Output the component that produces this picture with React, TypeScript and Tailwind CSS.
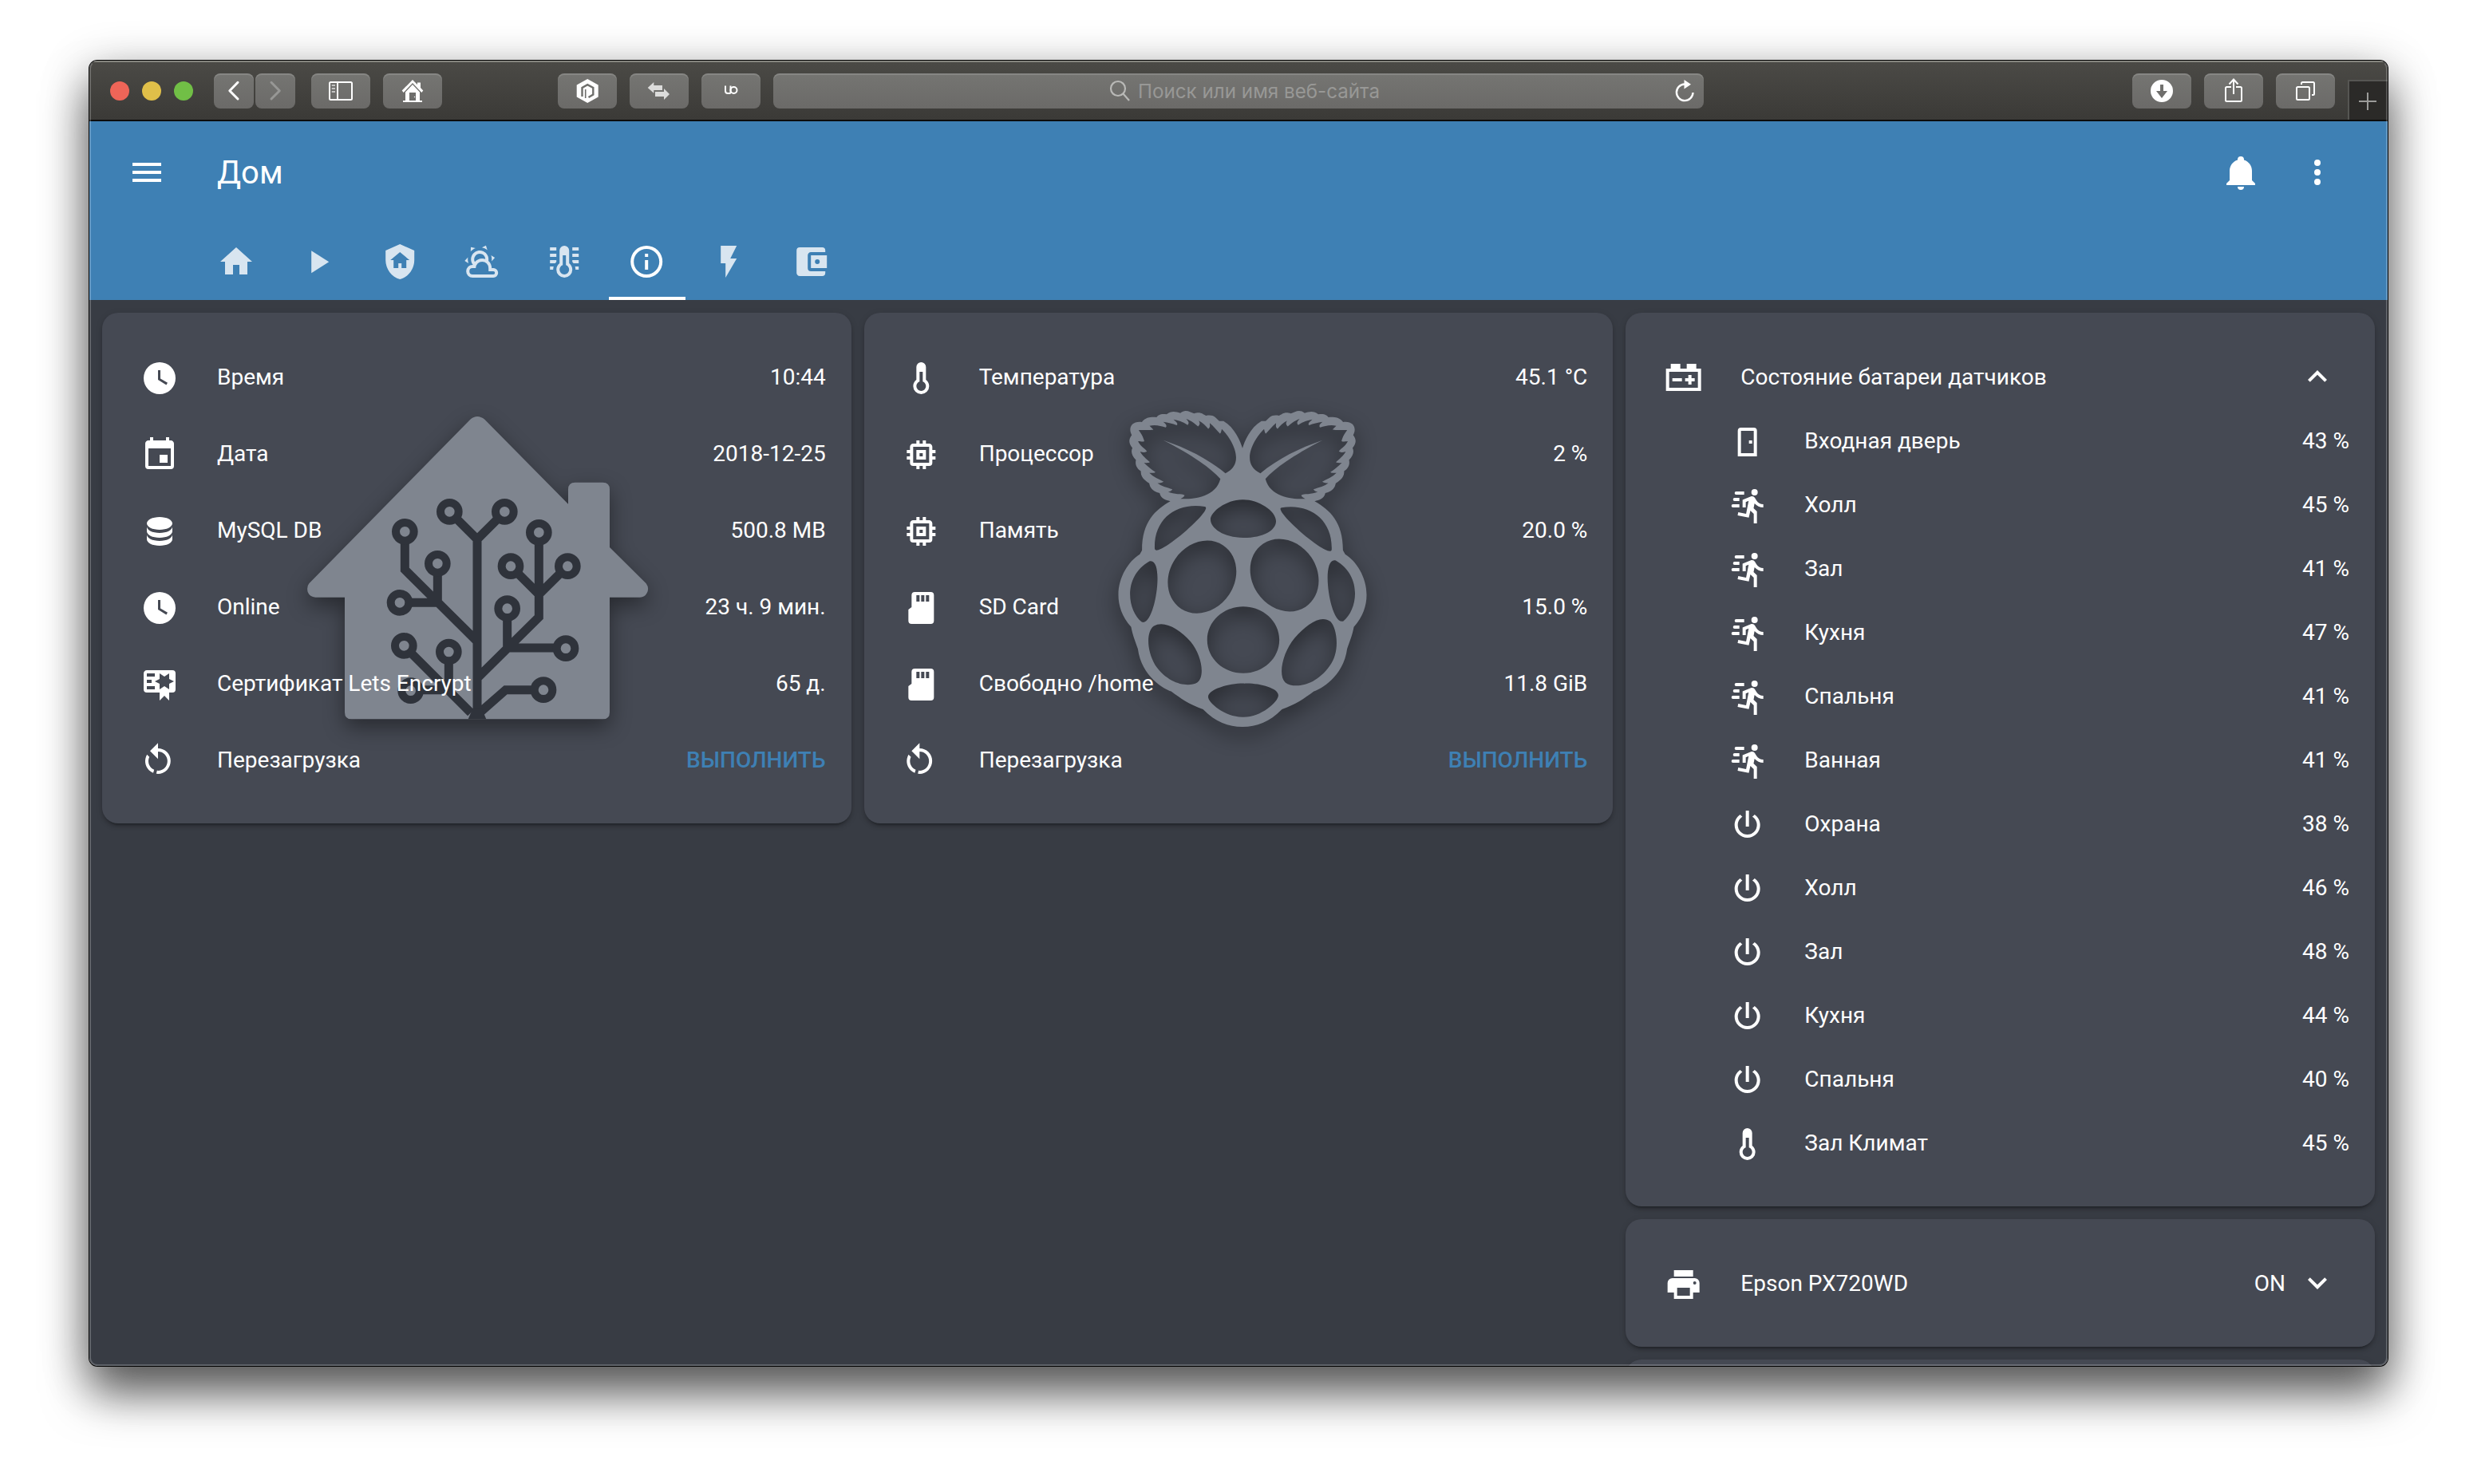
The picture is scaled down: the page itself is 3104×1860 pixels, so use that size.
import React from "react";
import { SiRaspberrypi } from "react-icons/si";

const I = {
  menu: "M3,6H21V8H3V6M3,11H21V13H3V11M3,16H21V18H3V16Z",
  dots: "M12,16A2,2 0 0,1 14,18A2,2 0 0,1 12,20A2,2 0 0,1 10,18A2,2 0 0,1 12,16M12,10A2,2 0 0,1 14,12A2,2 0 0,1 12,14A2,2 0 0,1 10,12A2,2 0 0,1 12,10M12,4A2,2 0 0,1 14,6A2,2 0 0,1 12,8A2,2 0 0,1 10,6A2,2 0 0,1 12,4Z",
  bell: "M21,19V20H3V19L5,17V11C5,7.9 7.03,5.17 10,4.29C10,4.19 10,4.1 10,4A2,2 0 0,1 12,2A2,2 0 0,1 14,4C14,4.1 14,4.19 14,4.29C16.97,5.17 19,7.9 19,11V17L21,19M14,21A2,2 0 0,1 12,23A2,2 0 0,1 10,21",
  home: "M10,20V14H14V20H19V12H22L12,3L2,12H5V20H10Z",
  play: "M8,5.14V19.14L19,12.14L8,5.14Z",
  shieldHome: "M11,13H13V16H16V11H18L12,6L6,11H8V16H11V13M12,1L21,5V11C21,16.55 17.16,21.74 12,23C6.84,21.74 3,16.55 3,11V5L12,1Z",
  weather: "M12.74,5.47C15.1,6.5 16.35,9.03 15.92,11.46C17.19,12.56 18,14.19 18,16V16.17C18.31,16.06 18.65,16 19,16A3,3 0 0,1 22,19A3,3 0 0,1 19,22H6A4,4 0 0,1 2,18A4,4 0 0,1 6,14H6.27C5,12.45 4.6,10.24 5.5,8.26C6.72,5.5 9.97,4.24 12.74,5.47M11.93,7.3C10.16,6.5 8.09,7.31 7.31,9.07C6.85,10.09 6.93,11.22 7.41,12.13C8.5,10.83 10.16,10 12,10C12.7,10 13.38,10.12 14,10.34C13.94,9.06 13.18,7.86 11.93,7.3M13.55,3.64C13,3.4 12.45,3.23 11.88,3.12L14.37,1.82L15.27,4.71C14.76,4.29 14.19,3.93 13.55,3.64M6.09,4.44C5.6,4.79 5.17,5.19 4.8,5.63L4.91,2.82L7.87,3.5C7.25,3.71 6.65,4.03 6.09,4.44M18,9.71C17.91,9.12 17.78,8.55 17.59,8L19.97,9.5L17.92,11.73C18.03,11.08 18.05,10.4 18,9.71M3.04,11.3C3.11,11.9 3.24,12.47 3.43,13L1.06,11.5L3.1,9.28C3,9.93 2.97,10.61 3.04,11.3M19,18H16V16A4,4 0 0,0 12,12A4,4 0 0,0 8,16H6A2,2 0 0,0 4,18A2,2 0 0,0 6,20H19A1,1 0 0,0 20,19A1,1 0 0,0 19,18Z",
  thermoLines: "M17,3H21V5H17V3M17,7H21V9H17V7M17,11H21V13H17.75L17,12.1V11M21,15V17H19C19,16.31 18.9,15.63 18.71,15H21M17,17A5,5 0 0,1 12,22A5,5 0 0,1 7,17C7,15.36 7.79,13.91 9,13V5A3,3 0 0,1 12,2A3,3 0 0,1 15,5V13C16.21,13.91 17,15.36 17,17M11,8V14.17C9.83,14.58 9,15.69 9,17A3,3 0 0,0 12,20A3,3 0 0,0 15,17C15,15.69 14.17,14.58 13,14.17V8H11M7,3V5H3V3H7M7,7V9H3V7H7M7,11V12.1L6.25,13H3V11H7M3,15H5.29C5.1,15.63 5,16.31 5,17H3V15Z",
  info: "M11,9H13V7H11M12,20C7.59,20 4,16.41 4,12C4,7.59 7.59,4 12,4C16.41,4 20,7.59 20,12C20,16.41 16.41,20 12,20M12,2A10,10 0 0,0 2,12A10,10 0 0,0 12,22A10,10 0 0,0 22,12A10,10 0 0,0 12,2M11,17H13V11H11V17Z",
  flash: "M7,2V13H10V22L17,10H13L17,2H7Z",
  wallet: "M21,18V19A2,2 0 0,1 19,21H5C3.89,21 3,20.1 3,19V5A2,2 0 0,1 5,3H19A2,2 0 0,1 21,5V6H12C10.89,6 10,6.9 10,8V16A2,2 0 0,0 12,18M12,16H22V8H12M16,13.5A1.5,1.5 0 0,1 14.5,12A1.5,1.5 0 0,1 16,10.5A1.5,1.5 0 0,1 17.5,12A1.5,1.5 0 0,1 16,13.5Z",
  clock: "M12,2A10,10 0 1,0 22,12A10,10 0 0,0 12,2M16.2,16.2L11,13V7H12.5V12.2L17,14.9L16.2,16.2Z",
  calendar: "M19,19H5V8H19M16,1V3H8V1H6V3H5C3.89,3 3,3.89 3,5V19A2,2 0 0,0 5,21H19A2,2 0 0,0 21,19V5C21,3.89 20.1,3 19,3H18V1M17,12H12V17H17V12Z",
  database: "M12,3C7.58,3 4,4.79 4,7C4,9.21 7.58,11 12,11C16.42,11 20,9.21 20,7C20,4.79 16.42,3 12,3M4,9V12C4,14.21 7.58,16 12,16C16.42,16 20,14.21 20,12V9C20,11.21 16.42,13 12,13C7.58,13 4,11.21 4,9M4,14V17C4,19.21 7.58,21 12,21C16.42,21 20,19.21 20,17V14C20,16.21 16.42,18 12,18C7.58,18 4,16.21 4,14Z",
  certificate: "M4,3C2.89,3 2,3.89 2,5V15A2,2 0 0,0 4,17H12V22L15,19L18,22V17H20A2,2 0 0,0 22,15V5A2,2 0 0,0 20,3H4M12,5L15,7L18,5V8.5L21,10L18,11.5V15L15,13L12,15V11.5L9,10L12,8.5V5M4,5H9V7H4V5M4,9H7V11H4V9M4,13H9V15H4V13Z",
  restart: "M11,4C13.1,4 15.1,4.8 16.6,6.3C19.7,9.4 19.7,14.5 16.6,17.6C14.8,19.5 12.3,20.2 9.9,19.9L10.4,17.9C12.1,18.1 13.9,17.5 15.2,16.2C17.5,13.9 17.5,10.1 15.2,7.7C14.1,6.6 12.5,6 11,6V10.6L6,5.6L11,0.6V4M5.3,17.6C2.7,15 2.3,11 4.1,7.9L5.6,9.4C4.5,11.6 4.9,14.4 6.8,16.2C7.3,16.7 7.9,17.1 8.6,17.4L8,19.4C7,19 6.1,18.4 5.3,17.6Z",
  thermometer: "M17,17A5,5 0 0,1 12,22A5,5 0 0,1 7,17C7,15.36 7.79,13.91 9,13V5A3,3 0 0,1 12,2A3,3 0 0,1 15,5V13C16.21,13.91 17,15.36 17,17M11,8V14.17C9.83,14.58 9,15.69 9,17A3,3 0 0,0 12,20A3,3 0 0,0 15,17C15,15.69 14.17,14.58 13,14.17V8H11Z",
  chip: "M17,17H7V7H17M21,11V9H19V7C19,5.89 18.1,5 17,5H15V3H13V5H11V3H9V5H7C5.89,5 5,5.89 5,7V9H3V11H5V13H3V15H5V17A2,2 0 0,0 7,19H9V21H11V19H13V21H15V19H17A2,2 0 0,0 19,17V15H21V13H19V11M13,13H11V11H13M15,9H9V15H15V9Z",
  sd: "M8,2A2,2 0 0,0 6,4V11.5L4,13V20A2,2 0 0,0 6,22H18A2,2 0 0,0 20,20V4A2,2 0 0,0 18,2H8M9,4H11V8H9V4M12,4H14V8H12V4M15,4H17V8H15V4Z",
  battery: "M4,3V6H1V20H23V6H20V3H14V6H10V3H4M3,8H21V18H3V8M15,10V12H13V14H15V16H17V14H19V12H17V10H15M5,12V14H11V12H5Z",
  door: "M8,3H16A2,2 0 0,1 18,5V21H6V5A2,2 0 0,1 8,3M8,5V19H16V5H8M13,11H15V13H13V11Z",
  run: "M16.5,5.5A2,2 0 0,0 18.5,3.5A2,2 0 0,0 16.5,1.5A2,2 0 0,0 14.5,3.5A2,2 0 0,0 16.5,5.5M12.9,19.4L13.9,15L16,17V23H18V15.5L15.9,13.5L16.5,10.5C17.89,12.09 19.89,13 22,13V11C20.24,11.03 18.6,10.11 17.7,8.6L16.7,7C16.34,6.4 15.7,6 15,6C14.7,6 14.5,6.1 14.2,6.1L9,8.3V13H11V9.6L12.8,8.9L11.2,17L6.3,16L5.9,18L12.9,19.4M4,9A1,1 0 0,1 3,8A1,1 0 0,1 4,7H7V9H4M5,5A1,1 0 0,1 4,4A1,1 0 0,1 5,3H10V5H5M3,13A1,1 0 0,1 2,12A1,1 0 0,1 3,11H7V13H3Z",
  power: "M16.56,5.44L15.11,6.89C16.84,7.94 18,9.83 18,12A6,6 0 0,1 12,18A6,6 0 0,1 6,12C6,9.83 7.16,7.94 8.88,6.88L7.44,5.44C5.36,6.88 4,9.28 4,12A8,8 0 0,0 12,20A8,8 0 0,0 20,12C20,9.28 18.64,6.88 16.56,5.44M13,3H11V13H13",
  printer: "M18,3H6V7H18M19,12A1,1 0 0,1 18,11A1,1 0 0,1 19,10A1,1 0 0,1 20,11A1,1 0 0,1 19,12M16,19H8V14H16M19,8H5A3,3 0 0,0 2,11V17H6V21H18V17H22V11A3,3 0 0,0 19,8Z",
  up: "M7.41,15.41L12,10.83L16.59,15.41L18,14L12,8L6,14L7.41,15.41Z",
  down: "M7.41,8.58L12,13.17L16.59,8.58L18,10L12,16L6,10L7.41,8.58Z",
};

function Icon({ d }: { d: string }) {
  return (
    <svg viewBox="0 0 24 24" className="size-12 shrink-0" fill="currentColor" fillRule="evenodd">
      <path d={d} />
    </svg>
  );
}

function Row({ icon, label, value, action, chevron }: { icon: string; label: string; value?: string; action?: boolean; chevron?: string }) {
  return (
    <div className="flex h-20 items-center">
      <div className="lead mr-8 flex h-20 w-20 items-center justify-center pt-1">
        <Icon d={icon} />
      </div>
      <span className="flex-1 pt-0.5 whitespace-nowrap">{label}</span>
      {value && <span className={action ? "pt-0.5 font-medium text-[#3e80b4]" : "pt-0.5"}>{value}</span>}
      {chevron && (
        <div className="flex w-20 justify-center">
          <Icon d={chevron} />
        </div>
      )}
    </div>
  );
}

const CARD = "relative rounded-[20px] bg-[#454953] px-8 py-10 shadow-[0_4px_4px_rgba(0,0,0,0.14),0_2px_10px_rgba(0,0,0,0.12),0_6px_2px_-4px_rgba(0,0,0,0.2)]";

const RINGS: [number, number][] = [
  [610, 424], [817, 424], [442, 499], [946, 502], [565, 619], [840, 629], [1054, 629], [423, 766],
  [827, 788], [439, 928], [607, 951], [1047, 938], [464, 1097], [963, 1094],
];

function HouseArt() {
  return (
    <svg viewBox="0 0 1440 1320" className="absolute top-[108px] left-[232px] h-[440px] w-[480px] overflow-visible">
      <g className="[filter:drop-shadow(0px_30px_40px_rgba(0,0,0,0.42))]">
        <path
          fill="#7f858f"
          d="M688,77Q714,55 742,77L1056,395V340Q1056,314 1082,314H1186Q1212,314 1212,340V558L1349,694Q1362,712 1352,730Q1344,746 1326,746H1212V1178Q1212,1204 1186,1204H242Q216,1204 216,1178V746H106Q84,744 77,726Q72,706 82,694Z"
        />
      </g>
      <g fill="none" stroke="#2f333b" strokeWidth="33">
        <path d="M714,1190V525M622,436L714,528L806,436M442,530V642L714,912M565,650V763M450,766H568M946,535V820L714,1050M851,640L946,735L1042,640M827,820V936H1020M450,940L690,1180M607,980V1094H490M714,1188L821,1094H940" />
      </g>
      <path d="M680,1204L697,1165H731L748,1204Z" fill="#2f333b" />
      {RINGS.map(([x, y]) => (
        <circle key={`${x}-${y}`} cx={x} cy={y} r="34" fill="#7f858f" stroke="#2f333b" strokeWidth="30" />
      ))}
    </svg>
  );
}

function BerryArt() {
  return (
    <div className="absolute top-[123px] left-[276px] scale-x-[0.988] [filter:drop-shadow(0px_10px_13px_rgba(0,0,0,0.42))]">
      <SiRaspberrypi className="size-[396px] text-[#7f858f] [clip-path:polygon(0_0,100%_0,100%_92px,325px_92px,313px_104px,313px_128px,324px_139px,100%_139px,100%_100%,0_100%)]" />
    </div>
  );
}

const TB = "flex h-11 items-center justify-center rounded-[8px] bg-linear-to-b from-[#757572] to-[#6b6a68] text-white shadow-[inset_0_2px_0_rgba(255,255,255,0.13)]";

function Toolbar() {
  return (
    <div className="flex h-[76px] items-start border-b-2 border-[#0c0c0b] bg-linear-to-b from-[#4b4a46] to-[#3b3a37] shadow-[inset_0_2px_0_#84847e]">
      <div className="flex w-[156px] gap-4 pt-[26px] pl-[26px]">
        <div className="size-6 rounded-full bg-[#ee6558]" />
        <div className="size-6 rounded-full bg-[#e0bf49]" />
        <div className="size-6 rounded-full bg-[#71bf46]" />
      </div>
      <div className="flex pt-4">
        <div className={`${TB} w-[50px]`}>
          <svg viewBox="0 0 50 44" className="h-11 w-[50px]" fill="none" stroke="currentColor" strokeWidth="3" strokeLinecap="round" strokeLinejoin="round">
            <path d="M30,11.300L19.800,21.700L30,32" />
          </svg>
        </div>
        <div className={`${TB} ml-0.5 w-[50px]`}>
          <svg viewBox="0 0 50 44" className="h-11 w-[50px] text-[#979795]" fill="none" stroke="currentColor" strokeWidth="3" strokeLinecap="round" strokeLinejoin="round">
            <path d="M20,11.300L30.300,21.700L20,32" />
          </svg>
        </div>
        <div className={`${TB} ml-5 w-[74px]`}>
          <svg viewBox="0 0 74 44" className="h-11 w-[74px]" fill="none" stroke="currentColor" strokeWidth="2">
            <rect x="23" y="11" width="28" height="22" rx="1.5" />
            <path d="M33,11V33" />
            <path d="M25.700,15H30M25.700,19H30M25.700,23H30" stroke="#c4c4c3" />
          </svg>
        </div>
        <div className={`${TB} ml-4 w-[74px]`}>
          <svg viewBox="0 0 74 44" className="h-11 w-[74px]" fill="currentColor">
            <path d="M37,8L23.700,21.500L25.700,24L37,12L48.300,24L50.300,21.500L47,18V11.500H43V14Z" />
            <path fillRule="evenodd" d="M37,14L28,23.500V34H25V36H49V34H46V23.500ZM33,24H41V34H33Z" />
            <circle cx="39.500" cy="29.500" r="0.700" />
          </svg>
        </div>
        <div className={`${TB} ml-[145px] w-[74px]`}>
          <svg viewBox="0 0 74 44" className="h-11 w-[74px]">
            <path d="M37.200,7L50.700,14.500V29.500L37.200,37L23.700,29.500V14.500Z" fill="currentColor" />
            <path d="M30.500,29V18L37.200,14.200L44.300,18V26.500L38.500,30" fill="none" stroke="#6f6f6c" strokeWidth="2.400" />
            <path d="M34.700,20V31" stroke="#6f6f6c" strokeWidth="1.600" />
          </svg>
        </div>
        <div className={`${TB} ml-4 w-[74px]`}>
          <svg viewBox="0 0 74 44" className="h-11 w-[74px] text-[#dcdcdb]" fill="currentColor">
            <path d="M22.700,18L30.300,11V15H41V21H30.300V24.700ZM50,26L43,33V29H32V23H43V19Z" />
          </svg>
        </div>
        <div className={`${TB} ml-4 w-[74px]`}>
          <svg viewBox="0 0 74 44" className="h-11 w-[74px]" fill="none" stroke="currentColor" strokeWidth="2">
            <path d="M30,15.500V22Q30,25 33,25H35.500Q36.500,25 36.500,23V15.500" />
            <circle cx="40.500" cy="21" r="4" />
          </svg>
        </div>
        <div className={`${TB} relative ml-4 w-[1166px] gap-2.5 pl-[15px]`}>
          <svg viewBox="0 0 26 28" className="h-7 w-[26px] text-[#b9b9b7]" fill="none" stroke="currentColor" strokeWidth="2.200">
            <circle cx="11" cy="11" r="9" />
            <path d="M17.500,17.500L25,26" />
          </svg>
          <span className="pt-0.5 font-['Inter'] text-[24.2px] text-[#989896]">Поиск или имя веб-сайта</span>
          <svg viewBox="0 0 26 30" className="absolute top-[7px] right-[11px] h-[30px] w-[26px]" fill="none" stroke="currentColor" strokeWidth="2.400">
            <path d="M13,6.500A10.300,10.300 0 1,0 23.500,17" />
            <path d="M12.500,1L21,6.800L12.500,12.500Z" fill="currentColor" stroke="none" />
          </svg>
        </div>
      </div>
      <div className="ml-auto flex items-start">
        <div className={`${TB} mt-4 w-[74px]`}>
          <svg viewBox="0 0 74 44" className="h-11 w-[74px]" fill="currentColor" fillRule="evenodd">
            <path d="M37,8A14,14 0 1,0 37,36A14,14 0 1,0 37,8ZM35,14H39V22H44L37,31L30,22H35Z" />
          </svg>
        </div>
        <div className={`${TB} mt-4 ml-4 w-[74px]`}>
          <svg viewBox="0 0 74 44" className="h-11 w-[74px]" fill="none" stroke="currentColor" strokeWidth="2">
            <path d="M34,17H28.500Q27,17 27,18.500V33.500Q27,35 28.500,35H45.500Q47,35 47,33.500V18.500Q47,17 45.500,17H40M37,26V8M31.500,13.500L37,7.500L42.500,13.500" />
          </svg>
        </div>
        <div className={`${TB} mt-4 ml-4 w-[74px]`}>
          <svg viewBox="0 0 74 44" className="h-11 w-[74px]" fill="none" stroke="currentColor" strokeWidth="2">
            <rect x="26" y="17" width="16" height="16" rx="1.500" />
            <path d="M32,14V12.500Q32,11 33.500,11H46.500Q48,11 48,12.500V25.500Q48,27 46.500,27H45" />
          </svg>
        </div>
        <div className="mt-6 ml-4 flex h-[50px] w-[50px] items-center justify-center border-t-2 border-l-2 border-[#565653] bg-[#2b2a28]">
          <svg viewBox="0 0 22 22" className="mt-0.5 mr-0.5 size-[22px] text-[#9b9b99]" stroke="currentColor" strokeWidth="2">
            <path d="M11,0V22M0,11H22" />
          </svg>
        </div>
      </div>
    </div>
  );
}

const TABS = [I.home, I.play, I.shieldHome, I.weather, I.thermoLines, I.info, I.flash, I.wallet];

const SENSORS: [string, string, string][] = [
  [I.door, "Входная дверь", "43 %"],
  [I.run, "Холл", "45 %"],
  [I.run, "Зал", "41 %"],
  [I.run, "Кухня", "47 %"],
  [I.run, "Спальня", "41 %"],
  [I.run, "Ванная", "41 %"],
  [I.power, "Охрана", "38 %"],
  [I.power, "Холл", "46 %"],
  [I.power, "Зал", "48 %"],
  [I.power, "Кухня", "44 %"],
  [I.power, "Спальня", "40 %"],
  [I.thermometer, "Зал Климат", "45 %"],
];

export default function App() {
  return (
    <div className="h-[1860px] w-[3104px] overflow-hidden bg-white px-[112px] pt-[76px] font-['Roboto',sans-serif] text-[28px] leading-10 text-white">
      <div className="h-[1636px] w-[2880px] rounded-[10px] shadow-[0_0_0_1px_#000,0_36px_56px_rgba(0,0,0,0.55),0_12px_60px_rgba(0,0,0,0.3)]">
        <div className="relative h-full overflow-hidden rounded-[10px] bg-[#383c44]">
          <Toolbar />
          <header className="h-56 bg-[#3e80b4]">
            <div className="flex h-32 items-center pr-16 pl-12">
              <Icon d={I.menu} />
              <h1 className="ml-16 pt-0.5 text-[40px]">Дом</h1>
              <div className="ml-auto flex gap-12">
                <Icon d={I.bell} />
                <Icon d={I.dots} />
              </div>
            </div>
            <nav className="flex h-24 gap-[6.94px] pl-[136px] [&>div:not(:first-child)>svg]:-translate-x-[0.8px]">
              {TABS.map((d, i) => (
                <div
                  key={i}
                  className={
                    d === I.info
                      ? "flex w-24 items-center justify-center border-b-4 border-white pt-1"
                      : "flex w-24 items-center justify-center opacity-80"
                  }
                >
                  <Icon d={d} />
                </div>
              ))}
            </nav>
          </header>
          <main className="grid grid-cols-3 items-start gap-4 p-4">
            <section className={CARD}>
              <HouseArt />
              <div className="relative flex flex-col gap-4">
                <Row icon={I.clock} label="Время" value="10:44" />
                <Row icon={I.calendar} label="Дата" value="2018-12-25" />
                <Row icon={I.database} label="MySQL DB" value="500.8 MB" />
                <Row icon={I.clock} label="Online" value="23 ч. 9 мин." />
                <Row icon={I.certificate} label="Сертификат Lets Encrypt" value="65 д." />
                <Row icon={I.restart} label="Перезагрузка" value="ВЫПОЛНИТЬ" action />
              </div>
            </section>
            <section className={CARD}>
              <BerryArt />
              <div className="relative flex flex-col gap-4 [&_.lead>svg]:-translate-x-[0.67px]">
                <Row icon={I.thermometer} label="Температура" value="45.1 °C" />
                <Row icon={I.chip} label="Процессор" value="2 %" />
                <Row icon={I.chip} label="Память" value="20.0 %" />
                <Row icon={I.sd} label="SD Card" value="15.0 %" />
                <Row icon={I.sd} label="Свободно /home" value="11.8 GiB" />
                <Row icon={I.restart} label="Перезагрузка" value="ВЫПОЛНИТЬ" action />
              </div>
            </section>
            <div className="flex flex-col gap-4 [&_.lead>svg]:translate-x-[0.67px]">
              <section className={CARD}>
                <Row icon={I.battery} label="Состояние батареи датчиков" chevron={I.up} />
                <div className="pl-20">
                  {SENSORS.map(([icon, label, value], i) => (
                    <Row key={i} icon={icon} label={label} value={value} />
                  ))}
                </div>
              </section>
              <section className={CARD}>
                <Row icon={I.printer} label="Epson PX720WD" value="ON" chevron={I.down} />
              </section>
              <section className={CARD} />
            </div>
          </main>
          <div className="pointer-events-none absolute inset-0 rounded-[10px] border-2 border-white/20 border-t-transparent" />
        </div>
      </div>
    </div>
  );
}
